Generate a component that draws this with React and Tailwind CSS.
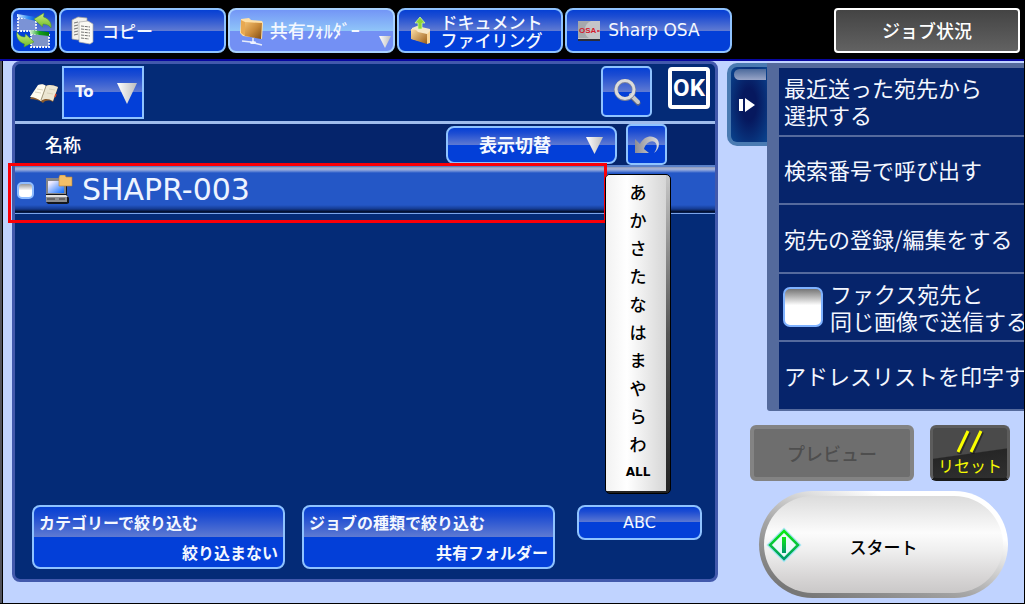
import React from "react";

const GLOSS =
  "border-2 border-[#8fc3ff] bg-[linear-gradient(to_bottom,#0640d4_0%,#1c4cd2_15%,#5f7ad2_50%,#033fd8_50%,#033fd8_100%)] text-[#f4f8ff]";
const GLOSS_LIGHT =
  "border-2 border-[#a9d2ff] bg-[linear-gradient(to_bottom,#7396f6_0%,#8fc4f8_50%,#7390f4_50%,#7390f4_100%)] text-[#f4f8ff]";
const LATIN = "font-['DejaVu_Sans','Noto_Sans_CJK_JP',sans-serif]";

function SwitchIcon() {
  return (
    <svg viewBox="0 0 40 40" className="size-10 shrink-0" aria-hidden="true">
      <defs>
        <linearGradient id="swg" x1="0" y1="0" x2="0" y2="1">
          <stop offset="0" stopColor="#cdf07c" />
          <stop offset="1" stopColor="#6fb82a" />
        </linearGradient>
        <linearGradient id="swb" x1="0" y1="0" x2="1" y2="0">
          <stop offset="0" stopColor="#dff0ff" />
          <stop offset="0.6" stopColor="#2f8cf4" />
          <stop offset="1" stopColor="#0a56d6" />
        </linearGradient>
        <linearGradient id="swn" x1="0" y1="0" x2="1" y2="0">
          <stop offset="0" stopColor="#d8f5d8" />
          <stop offset="0.5" stopColor="#14a01a" />
          <stop offset="1" stopColor="#067a0c" />
        </linearGradient>
      </defs>
      <rect x="4" y="7" width="18" height="13" fill="#7b93d6" stroke="#fff" strokeWidth="1.8" strokeDasharray="1.8 1.2" />
      <path d="M3 3l19 3v4L3 6z" fill="url(#swb)" />
      <rect x="17" y="23" width="18" height="13" fill="#7f93c8" stroke="#fff" strokeWidth="1.8" strokeDasharray="1.8 1.2" />
      <path d="M16 19l19 2v4l-19-2z" fill="url(#swn)" />
      <path d="M20 8 30 2l-.5 4C35 8 38 12 37 17c-2-3-5-4-8-4l-.5 3z" fill="url(#swg)" stroke="#4d9420" strokeWidth=".5" />
      <path d="M20 31 10 36l.5-3C5 31 2 27 3 21c2 4 5 5 8 5l.5-3z" fill="url(#swg)" stroke="#4d9420" strokeWidth=".5" />
    </svg>
  );
}

function CopyIcon() {
  return (
    <svg viewBox="0 0 26 32" className="h-8 w-[26px]" aria-hidden="true">
      <path d="M2 5 8 2l9 1v20l-9 2-6-1z" fill="#f2f1ec" stroke="#9c9c9c" strokeWidth=".7" />
      <path d="M4 8l4-1M4 11l4-1M4 14l4-1M4 17l4-1M4 20l4-1" stroke="#777" strokeWidth="1" />
      <path d="M9 7l9-1 5 3v18l-3 2-11-2z" fill="#fbfaf5" stroke="#aaa" strokeWidth=".7" />
      <path d="M11 11l9 1M11 14l9 1M11 17l9 1M11 20l9 1M11 23l8 1" stroke="#666" strokeWidth=".9" strokeDasharray="3 .8" />
    </svg>
  );
}

function NetFolderIcon() {
  return (
    <svg viewBox="0 0 26 30" className="h-[30px] w-[26px]" aria-hidden="true">
      <defs>
        <linearGradient id="nf" x1="0" y1="0" x2="1" y2="1">
          <stop offset="0" stopColor="#f2bd6c" />
          <stop offset="0.5" stopColor="#c98a3a" />
          <stop offset="1" stopColor="#7d4a10" />
        </linearGradient>
      </defs>
      <path d="M14 22v4M3 25l9 1M15 27l8 2" stroke="#e6ecfa" strokeWidth="1.5" />
      <ellipse cx="14" cy="26.500" rx="3" ry="1.500" fill="#f0f4ff" />
      <path d="M2 3l8-1 2 2 11 1 1 2-1 16-3-1L4 20 1 17z" fill="#ffe1a8" />
      <path d="M6 6l17 1-1 16-16-3z" fill="url(#nf)" />
      <path d="M2 4l4 2v14l-4-3z" fill="#e9a950" />
    </svg>
  );
}

function FilingIcon() {
  return (
    <svg viewBox="0 0 24 30" className="h-[30px] w-6" aria-hidden="true">
      <defs>
        <linearGradient id="ff" x1="0" y1="0" x2="1" y2="1">
          <stop offset="0" stopColor="#ffe0a6" />
          <stop offset="1" stopColor="#9a5c16" />
        </linearGradient>
      </defs>
      <path d="M3 12l5-2 13 3v13l-3 1L3 23z" fill="#f7e8c8" />
      <path d="M2 13l5 1 2 2 9 2v10L2 23z" fill="url(#ff)" />
      <path d="M18 18l3-3v12l-3 1z" fill="#f9d596" />
      <path d="M11 1l5 6h-3v6H9V7H6z" fill="#8ed43a" stroke="#dcffb0" strokeWidth=".7" />
    </svg>
  );
}

function OsaIcon() {
  return (
    <svg viewBox="0 0 24 22" className="h-[22px] w-6" aria-hidden="true">
      <rect x="1" y="1" width="22" height="20" fill="#c4c5c8" />
      <path d="M1 1h13C6 4 6 15 12 18H1z" fill="#a6a8ac" />
      <text x="2" y="13" fontSize="8" fontWeight="bold" fill="#d4192c" fontFamily="Liberation Sans, sans-serif">
        OSA
      </text>
      <path d="M20 11h2.500" stroke="#d4192c" strokeWidth="1.500" />
      <rect x="1" y="19" width="22" height="2" fill="#2b2d3a" />
    </svg>
  );
}

function BookIcon() {
  return (
    <svg viewBox="0 0 30 22" className="h-[22px] w-[30px]" aria-hidden="true">
      <path d="M1 16 9 3c3-2 6-1 8 0 3-2 7-1 12 1l-5 15c-4-2-7-2-10 1-4-3-8-4-13-4z" fill="#8a5a2c" />
      <path d="M1 14 9 2c3-1 6-1 8 1l-5 15c-3-2-7-4-11-4z" fill="#fffbee" />
      <path d="M17 3c3-2 7-1 12 1l-5 14c-4-2-8-3-12 0z" fill="#ece6d2" />
      <path d="M17 3 12 17" stroke="#a39b80" strokeWidth="1" fill="none" />
      <path d="M8 6l6 1M6 9l6 1M20 6l6 1M18 10l6 1" stroke="#d3ccb4" strokeWidth=".8" fill="none" />
      <path d="M26 14l1-3" stroke="#e04422" strokeWidth="1.500" />
    </svg>
  );
}

function Triangle({ className }) {
  return (
    <svg viewBox="0 0 20 20" className={className} aria-hidden="true" preserveAspectRatio="none">
      <defs>
        <linearGradient id="tri" x1="0" y1="0" x2="1" y2="0">
          <stop offset="0" stopColor="#ffffff" />
          <stop offset="1" stopColor="#bdbdbd" />
        </linearGradient>
      </defs>
      <path d="M0 0h20L10 20z" fill="url(#tri)" />
    </svg>
  );
}

function SearchIcon() {
  return (
    <svg viewBox="0 0 28 28" className="size-7" aria-hidden="true">
      <path d="M18 18l7 7" stroke="#5c6480" strokeWidth="5" strokeLinecap="round" />
      <path d="M18 17l7 7" stroke="#c9c9c9" strokeWidth="4" strokeLinecap="round" />
      <circle cx="12" cy="12" r="9" fill="none" stroke="#7d839a" strokeWidth="4" />
      <circle cx="12" cy="11.500" r="9" fill="none" stroke="#dcdcdc" strokeWidth="3" />
    </svg>
  );
}

function UndoIcon() {
  return (
    <svg viewBox="0 0 26 20" className="h-5 w-[26px]" aria-hidden="true">
      <defs>
        <linearGradient id="un" x1="0" y1="0" x2="1" y2="0">
          <stop offset="0" stopColor="#8e8e94" />
          <stop offset="1" stopColor="#dcdce0" />
        </linearGradient>
      </defs>
      <path d="M1 4v14h14l-5-4C12 7 19 4 22 8.500c1.500 3 .5 6-2 9.500 5-3 6.500-10 3-14C18-.5 10 1 6 9z" fill="url(#un)" />
    </svg>
  );
}

function ComputerIcon() {
  return (
    <svg viewBox="0 0 28 30" className="h-[30px] w-7" aria-hidden="true">
      <defs>
        <linearGradient id="scr" x1="0" y1="0" x2="1" y2="1">
          <stop offset="0.150" stopColor="#eeeaff" />
          <stop offset="1" stopColor="#0a6cff" />
        </linearGradient>
      </defs>
      <path d="M1 4h21v16l2 3v5l-2 1H3l-2-2z" fill="#14161c" />
      <rect x="1" y="3" width="20" height="16" fill="#858588" />
      <rect x="3" y="6" width="16" height="12" fill="url(#scr)" />
      <path d="M1 20h20l2 2H1z" fill="#e2e2e2" />
      <rect x="1" y="22" width="21" height="5" fill="#8d8d90" />
      <path d="M2 24h8M14 24h6" stroke="#3a3a3c" strokeWidth="1" />
      <path d="M14 2l1-2h5l1 2h6v9H14z" fill="#f3bf67" stroke="#b7803a" strokeWidth=".6" />
    </svg>
  );
}

function StartIcon() {
  return (
    <svg viewBox="0 0 36 36" className="size-9 shrink-0" aria-hidden="true">
      <defs>
        <linearGradient id="st" x1="0" y1="0" x2="0" y2="1">
          <stop offset="0" stopColor="#0bea12" />
          <stop offset="1" stopColor="#00996a" />
        </linearGradient>
      </defs>
      <path d="M18 4 32 18 18 32 4 18z" fill="#dff8f8" stroke="#a6e6f4" strokeWidth="5" />
      <path d="M18 4 32 18 18 32 4 18z" fill="#e9fafa" stroke="url(#st)" strokeWidth="2.500" />
      <rect x="16" y="10" width="4" height="16" fill="url(#st)" />
    </svg>
  );
}

function ModeTab({ icon, children, active }) {
  return (
    <button
      type="button"
      className={`relative flex h-[45px] min-w-0 flex-1 items-center rounded-lg pl-[6px] text-left text-[17px] font-medium whitespace-nowrap ${
        active ? GLOSS_LIGHT : GLOSS
      }`}
    >
      <span className="flex w-8 shrink-0 justify-center">{icon}</span>
      {children}
    </button>
  );
}

function FilterButton({ title, value }) {
  return (
    <button
      type="button"
      className={`flex h-16 min-w-0 flex-col items-start justify-between rounded-lg px-[5px] text-[16px] leading-[30px] font-bold whitespace-nowrap ${GLOSS}`}
    >
      <span>{title}</span>
      <span className="self-end">{value}</span>
    </button>
  );
}

function ActionRow({ children }) {
  return (
    <li className="border-b-2 border-[#556a9d]">
      <button type="button" className="flex h-full w-full items-center pl-[5px] text-left whitespace-nowrap">
        {children}
      </button>
    </li>
  );
}

const KANA = ["あ", "か", "さ", "た", "な", "は", "ま", "や", "ら", "わ"];

export default function App() {
  return (
    <div className="flex min-h-screen flex-col overflow-hidden border-r border-b border-black bg-[#c0d3ff] font-['Noto_Sans_CJK_JP',sans-serif] shadow-[inset_2px_0_0_#50525c,inset_3px_0_0_#000]">
      <header className="flex h-[61px] items-start justify-between border-b-2 border-[#0808a0] bg-black pt-2 pr-1 pl-[11px]">
        <nav className="mr-[102px] flex flex-1 gap-[2px]">
          <button
            type="button"
            aria-label="モード切替"
            className={`flex h-[45px] w-[46px] shrink-0 items-center justify-center rounded-lg ${GLOSS}`}
          >
            <SwitchIcon />
          </button>
          <ModeTab icon={<CopyIcon />}>
            <span className="pl-[3px]">コピー</span>
          </ModeTab>
          <ModeTab icon={<NetFolderIcon />} active>
            <span className="pl-[2px] text-[18px]">共有ﾌｫﾙﾀﾞｰ</span>
            <Triangle className="absolute right-[2px] bottom-[3px] h-3 w-3" />
          </ModeTab>
          <ModeTab icon={<FilingIcon />}>
            <span className="pl-1 leading-[18px]">
              ドキュメント
              <br />
              ファイリング
            </span>
          </ModeTab>
          <ModeTab icon={<OsaIcon />}>
            <span className={`pl-[3px] font-normal ${LATIN}`}>Sharp OSA</span>
          </ModeTab>
        </nav>
        <button
          type="button"
          className="h-[45px] w-[186px] rounded-[4px] border-2 border-white bg-linear-to-b from-[#444] to-[#626262] text-[18px] font-medium text-white"
        >
          ジョブ状況
        </button>
      </header>

      <div className="flex flex-1 pl-3">
        <main className="mb-[21px] flex min-w-0 flex-1 flex-col rounded-lg border-[3px] border-[#4259ac] bg-[#042b77]">
          <div className="flex h-[57px] items-start pt-[2px] pl-[14px]">
            <span className="mt-[17px]">
              <BookIcon />
            </span>
            <div className="relative ml-[3px]">
              <select
                aria-label="宛先種別"
                className={`h-[53px] w-[82px] appearance-none pl-[11px] text-[15px] font-bold ${LATIN} ${GLOSS}`}
              >
                <option>To</option>
              </select>
              <Triangle className="pointer-events-none absolute top-[17px] right-[7px] h-[21px] w-5" />
            </div>
            <button
              type="button"
              aria-label="検索"
              className={`ml-auto flex h-[51px] w-[51px] items-center justify-center rounded-[5px] ${GLOSS}`}
            >
              <SearchIcon />
            </button>
            <button
              type="button"
              className="mt-[1px] mr-[5px] ml-4 flex size-[42px] items-center justify-center rounded-[4px] border-4 border-white font-['Roboto',sans-serif] text-[24px] leading-none font-bold text-white"
            >
              OK
            </button>
          </div>

          <div className="flex h-[44px] items-center border-t-[3px] border-[#9fbcec] bg-[#05246b] pl-[30px] text-[18px] font-medium text-white">
            <span>名称</span>
            <div className="relative ml-auto">
              <select
                aria-label="表示切替"
                className={`h-[38px] w-[171px] appearance-none rounded-lg pl-[31px] text-[18px] font-bold ${GLOSS}`}
              >
                <option>表示切替</option>
              </select>
              <Triangle className="pointer-events-none absolute top-[11px] right-[14px] h-[17px] w-[17px]" />
            </div>
            <button
              type="button"
              aria-label="元に戻す"
              className={`mr-[48px] ml-[9px] flex h-[41px] w-[41px] items-center justify-center rounded-[5px] ${GLOSS}`}
            >
              <UndoIcon />
            </button>
          </div>

          <div className="relative flex-1">
            <label className="flex h-[49px] items-center border-t-2 border-b border-t-[#5a80c8] border-b-[#7ba4ea] bg-[linear-gradient(to_bottom,#8d98b8_0px,#a8b4d8_2px,#6f8fd8_4px,#2457c6_6px,#2457c6_38px,#143a90_42px,#020a20_45px,#0a2c74_46px)] pl-[2px]">
              <input
                type="checkbox"
                className="size-[17px] appearance-none rounded-[5px] border-2 border-[#8fbcff] bg-linear-to-b from-[#999] to-white to-50%"
              />
              <span className="mr-[9px] ml-[11px]">
                <ComputerIcon />
              </span>
              <span className={`text-[30px] leading-none text-[#eef4ff] ${LATIN}`}>SHAPR-003</span>
            </label>
            <div className="pointer-events-none absolute -top-[2px] right-[108px] -left-[7px] h-[60px] border-[3px] border-[#fb0007]" />
            <div className="absolute top-[9px] right-[44px] w-[66px] overflow-hidden rounded-[5px] border border-black bg-linear-to-b from-[#c8c8c8] via-[#555] to-[#222] pr-1 pb-[2px]">
              <div className="bg-linear-to-r from-[#f2f2f2] via-white via-35% to-[#d6d6d6] pt-[3px] pb-[5px] pl-1 text-black">
                {KANA.map((k) => (
                  <button key={k} type="button" className="block h-7 w-full text-center text-[17px] leading-7 font-medium">
                    {k}
                  </button>
                ))}
                <button type="button" className={`block h-7 w-full text-center text-[12px] leading-7 font-bold ${LATIN}`}>
                  ALL
                </button>
              </div>
            </div>
          </div>

          <div className="grid grid-cols-[270fr_275fr_125fr] items-start pr-[13px] pb-[10px] pl-[17px]">
            <div className="grid pr-[17px]">
              <FilterButton title="カテゴリーで絞り込む" value="絞り込まない" />
            </div>
            <div className="grid pr-[22px]">
              <FilterButton title="ジョブの種類で絞り込む" value="共有フォルダー" />
            </div>
            <button type="button" className={`h-[35px] rounded-lg text-[16px] ${LATIN} ${GLOSS}`}>
              ABC
            </button>
          </div>
        </main>

        <aside className="ml-[9px] flex w-[297px] shrink-0 flex-col pt-[2px]">
          <div className="flex items-start">
            <button
              type="button"
              aria-label="パネルを閉じる"
              className="flex h-[83px] w-10 flex-col items-center rounded-l-[10px] border-4 border-r-0 border-[#4a7bb2] bg-[radial-gradient(ellipse_at_center,#06185e_30%,#0a4590_100%)] pt-[2px]"
            >
              <span className="ml-[2px] h-[11px] w-[32px] rounded-l-full bg-linear-to-b from-[#4c6a9c] to-[#9aa6c8]" />
              <svg viewBox="0 0 16 14" className="mt-[18px] mr-1 h-[14px] w-4" aria-hidden="true">
                <path d="M0 1h4v12H0zM6 0l10 7-10 7z" fill="#fff" />
              </svg>
            </button>
            <ul className="grid h-[348px] min-w-0 flex-1 grid-rows-5 overflow-hidden rounded-bl-[3px] border-t-[5px] border-l-12 border-[#546a9c] bg-[#06246b] text-[22px] leading-[27px] text-[#f4f7ff]">
              <ActionRow>
                最近送った宛先から
                <br />
                選択する
              </ActionRow>
              <ActionRow>検索番号で呼び出す</ActionRow>
              <ActionRow>宛先の登録/編集をする</ActionRow>
              <li className="border-b-2 border-[#556a9d]">
                <label className="flex h-full items-center pl-1 whitespace-nowrap">
                  <input
                    type="checkbox"
                    className="mr-[7px] size-10 shrink-0 appearance-none rounded-[7px] border-2 border-[#7fb2ff] bg-linear-to-b from-[#777] to-white to-45%"
                  />
                  <span>
                    ファクス宛先と
                    <br />
                    同じ画像で送信する
                  </span>
                </label>
              </li>
              <ActionRow>アドレスリストを印字す</ActionRow>
            </ul>
          </div>

          <div className="mt-[14px] flex pr-[14px] pl-[23px]">
            <button
              type="button"
              disabled
              className="h-14 flex-1 rounded-md border-4 border-[#838383] bg-[#6e6e6e] text-[18px] font-medium text-[#4e4e4e]"
            >
              プレビュー
            </button>
            <button
              type="button"
              className="ml-4 flex h-14 w-20 flex-col items-center rounded-md border-[3px] border-[#5c5c5c] border-b-[#1a1a1a] bg-[linear-gradient(172deg,#4a4a4a_50%,#262626_52%,#303030)] text-[16px] leading-[22px] text-[#f6fa00]"
            >
              <svg viewBox="0 0 28 24" className="mt-[2px] h-6 w-7 shrink-0" aria-hidden="true">
                <path d="M3 24 13 2M16 24 26 2" stroke="#000" strokeWidth="4" opacity=".4" />
                <path d="M2 22 12 1M15 22 25 1" stroke="#faff00" strokeWidth="3" />
              </svg>
              リセット
            </button>
          </div>

          <button
            type="button"
            className="mt-[10px] mr-4 ml-8 h-[107px] rounded-[54px] bg-[linear-gradient(20deg,#777_10%,#a5a5a5_40%,#fff_75%)] p-[5px] text-[17px] font-medium text-black"
          >
            <span className="flex h-full items-center rounded-[49px] bg-[linear-gradient(to_bottom,#dcdcdc_0%,#fcfcfc_38%,#f0f0f0_55%,#d6d4d4_85%,#cac8c8_100%)] pl-[2px]">
              <StartIcon />
              <span className="flex-1 pt-1 pr-[38px] text-center">スタート</span>
            </span>
          </button>
        </aside>
      </div>
    </div>
  );
}
